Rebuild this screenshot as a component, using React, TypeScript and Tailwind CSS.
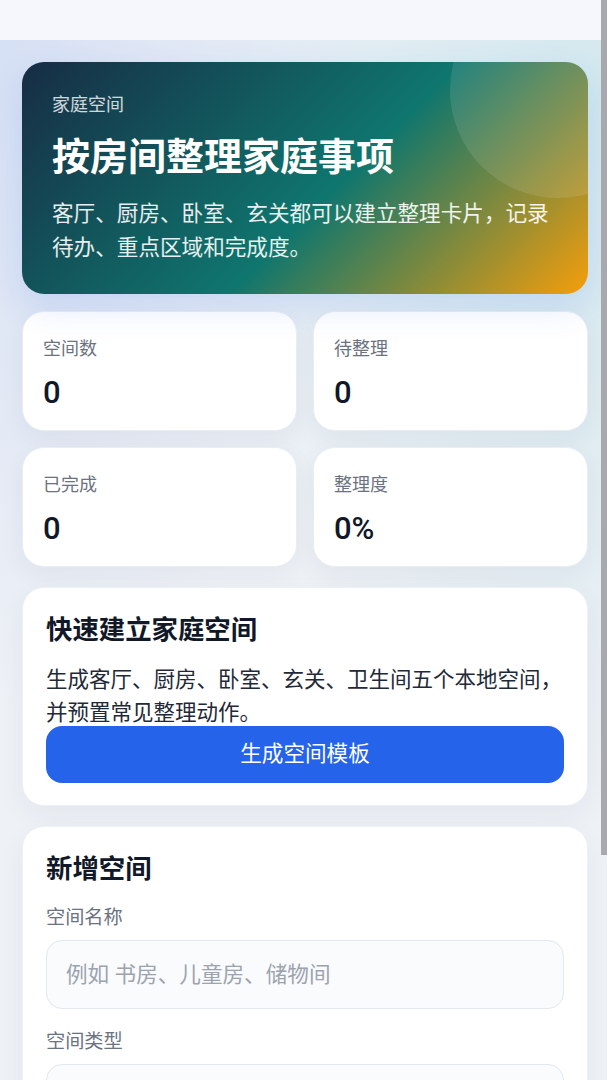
import React from "react";

type Stat = { label: string; value: string };

const STATS: Stat[] = [
  { label: "空间数", value: "0" },
  { label: "待整理", value: "0" },
  { label: "已完成", value: "0" },
  { label: "整理度", value: "0%" },
];

const FONT = "font-['Roboto','Noto_Sans_CJK_SC',sans-serif]";

function StatCard({ label, value }: Stat): React.ReactElement {
  return (
    <div className="flex h-[120px] flex-col rounded-[22px] border border-[#e9eef5] bg-white pl-5 pt-[23px] shadow-[0_8px_24px_rgba(30,41,59,0.05)]">
      <p className="text-[18px] leading-[28px] text-[#6b7280]">{label}</p>
      <p className="mt-3 text-[31px] font-medium leading-[36px] text-[#111827]">{value}</p>
    </div>
  );
}

function Field({ label, placeholder }: { label: string; placeholder?: string }): React.ReactElement {
  return (
    <div className="flex flex-col">
      <label className="text-[19.2px] leading-[28px] text-[#6b7280]">{label}</label>
      <input
        className="mt-2 h-[69px] w-full rounded-2xl border border-[#e2e8f0] bg-[#f9fbfd] px-[19px] text-[21.6px] text-[#111827] outline-none placeholder:text-[#9ca3af]"
        placeholder={placeholder}
        readOnly
      />
    </div>
  );
}

export default function App(): React.ReactElement {
  return (
    <div className={`relative h-[1080px] w-[607px] overflow-hidden bg-[#eef1f6] ${FONT}`}>
      <div className="h-full bg-[radial-gradient(ellipse_at_0%_5%,#d6e0f4_0%,transparent_45%),radial-gradient(ellipse_at_100%_10%,#d2e8ee_0%,transparent_50%)]">
        <header className="h-10 bg-[#f5f7fc]" />

        <main className="flex flex-col pl-[22px] pr-[19px] pt-[22px]">
          <section className="relative overflow-hidden rounded-[22px] bg-[linear-gradient(135deg,#172c44_0%,#0f766e_55%,#f59e0b_100%)] px-[30px] pb-[29px] pt-[30px] shadow-[0_14px_34px_rgba(37,99,235,0.14)]">
            <div
              aria-hidden
              className="absolute -right-[78px] -top-[80px] h-[216px] w-[216px] rounded-full bg-white/10"
            />
            <p className="relative text-[18px] leading-[26px] text-white/80">家庭空间</p>
            <h1 className="relative mt-4 text-[38px] font-bold leading-[46px] text-white">
              按房间整理家庭事项
            </h1>
            <p className="relative mt-[17px] text-[21.6px] leading-[34px] text-white/90">
              客厅、厨房、卧室、玄关都可以建立整理卡片，记录待办、重点区域和完成度。
            </p>
          </section>

          <div className="mt-[17px] grid grid-cols-2 gap-4">
            {STATS.map((s) => (
              <StatCard key={s.label} label={s.label} value={s.value} />
            ))}
          </div>

          <section className="mt-5 flex flex-col rounded-[22px] border border-[#edf1f6] bg-white px-[23px] pb-[22px] pt-[25px] shadow-[0_10px_28px_rgba(30,41,59,0.05)]">
            <h2 className="text-[26.4px] font-bold leading-[34px] text-[#111827]">快速建立家庭空间</h2>
            <p className="mt-4 text-[21.5px] leading-[33px] text-[#1f2937]">
              生成客厅、厨房、卧室、玄关、卫生间五个本地空间，并预置常见整理动作。
            </p>
            <button
              type="button"
              className="-mt-[3px] h-[57px] w-full rounded-2xl bg-[#2563eb] text-[21.6px] text-white"
            >
              生成空间模板
            </button>
          </section>

          <section className="mt-5 flex flex-col rounded-[22px] border border-[#edf1f6] bg-white px-[23px] pb-6 pt-[25px] shadow-[0_10px_28px_rgba(30,41,59,0.05)]">
            <h2 className="text-[26.4px] font-bold leading-[34px] text-[#111827]">新增空间</h2>
            <div className="mt-[18px] flex flex-col gap-[19px]">
              <Field label="空间名称" placeholder="例如 书房、儿童房、储物间" />
              <Field label="空间类型" />
            </div>
          </section>
        </main>
      </div>

      <div aria-hidden className="absolute right-0 top-0 h-[855px] w-[6px] bg-[#a7a9ae]" />
    </div>
  );
}
